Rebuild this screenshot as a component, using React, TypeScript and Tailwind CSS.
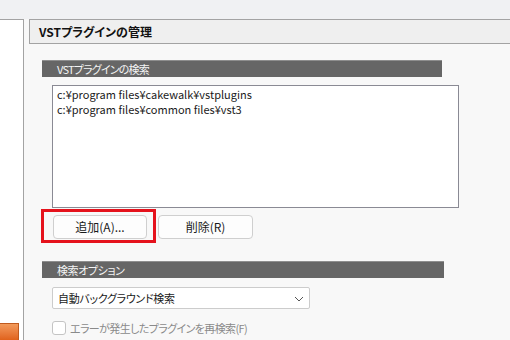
import React from 'react';

const FONT = { fontFamily: '"Noto Sans CJK JP", "Noto Sans", sans-serif' };

const SectionBar: React.FC<{ label: string; w: string; track: string }> = ({ label, w, track }) => (
  <div className={`h-[17px] ${w} ${track} bg-[#666666] border-t border-[#8e8e8e] text-[#f4f4f4] text-[11px] leading-[16px] pl-[15px]`}>
    {label}
  </div>
);

export default function App() {
  return (
    <div
      className="w-[510px] h-[340px] bg-[#f8f8f8] relative overflow-hidden text-[#1a1a1a] [font-feature-settings:'palt']"
      style={FONT}
    >
      {/* top strip */}
      <div className="h-[19px] bg-[#f0f1f3]" />

      <div className="flex h-[321px]">
        {/* left panel */}
        <div className="w-[24px] bg-white border-t border-r border-[#a3a3a3] flex flex-col justify-end">
          <div className="w-[19px] h-[17px] bg-gradient-to-b from-[#f29a5a] to-[#e0621a] border-t border-r border-[#c05a1e]" />
        </div>

        <div className="flex-1 pl-[5px]">
          {/* header */}
          <div className="h-[25px] bg-[#efefef] border border-r-0 border-[#a3a3a3] pl-[9px] text-[12px] font-bold leading-[24px] text-[#111]">
            VSTプラグインの管理
          </div>

          <div className="pl-[13px] pt-[16px]">
            <SectionBar label="VSTプラグインの検索" w="w-[400px]" track="tracking-[-0.8px]" />

            <div className="ml-[10px] mt-[8px] w-[407px] h-[123px] bg-white border border-[#8a8a94] px-[4px] pt-[1px] text-[11px] leading-[15px]">
              <div>c:¥program files¥cakewalk¥vstplugins</div>
              <div>c:¥program files¥common files¥vst3</div>
            </div>

            <div className="relative ml-[11px] mt-[7px] flex gap-[11px]">
              <button className="w-[94px] h-[24px] bg-[#fdfdfd] border border-[#cfcfcf] rounded-[4px] text-[12px] text-[#1a1a1a]">
                追加(A)...
              </button>
              <button className="w-[95px] h-[24px] bg-[#fdfdfd] border border-[#cfcfcf] rounded-[4px] text-[12px] text-[#1a1a1a]">
                削除(R)
              </button>
              {/* highlight */}
              <div className="absolute left-[-12px] top-[-6px] w-[115px] h-[34px] border-[3px] border-[#e5121c]" />
            </div>

            <div className="mt-[22px]">
              <SectionBar label="検索オプション" w="w-[402px]" track="tracking-[-0.4px]" />
            </div>

            <div className="ml-[10px] mt-[9px] w-[258px] h-[22px] bg-white border border-[#cccccc] rounded-[2px] flex items-center justify-between pl-[5px] pr-[5px] text-[11px] tracking-[-0.3px]">
              <span>自動バックグラウンド検索</span>
              <svg width="10" height="6" viewBox="0 0 10 6" className="mt-[2px]">
                <path d="M1 1 L5 5 L9 1" fill="none" stroke="#555" strokeWidth="1" />
              </svg>
            </div>

            <div className="ml-[10px] mt-[11px] flex items-center gap-[4px] text-[11px] tracking-[-0.6px] text-[#8a8a8a]">
              <div className="w-[14px] h-[14px] bg-white border border-[#c4c4c4] rounded-[3px]" />
              <span>エラーが発生したプラグインを再検索(F)</span>
            </div>
          </div>
        </div>
      </div>
    </div>
  );
}
